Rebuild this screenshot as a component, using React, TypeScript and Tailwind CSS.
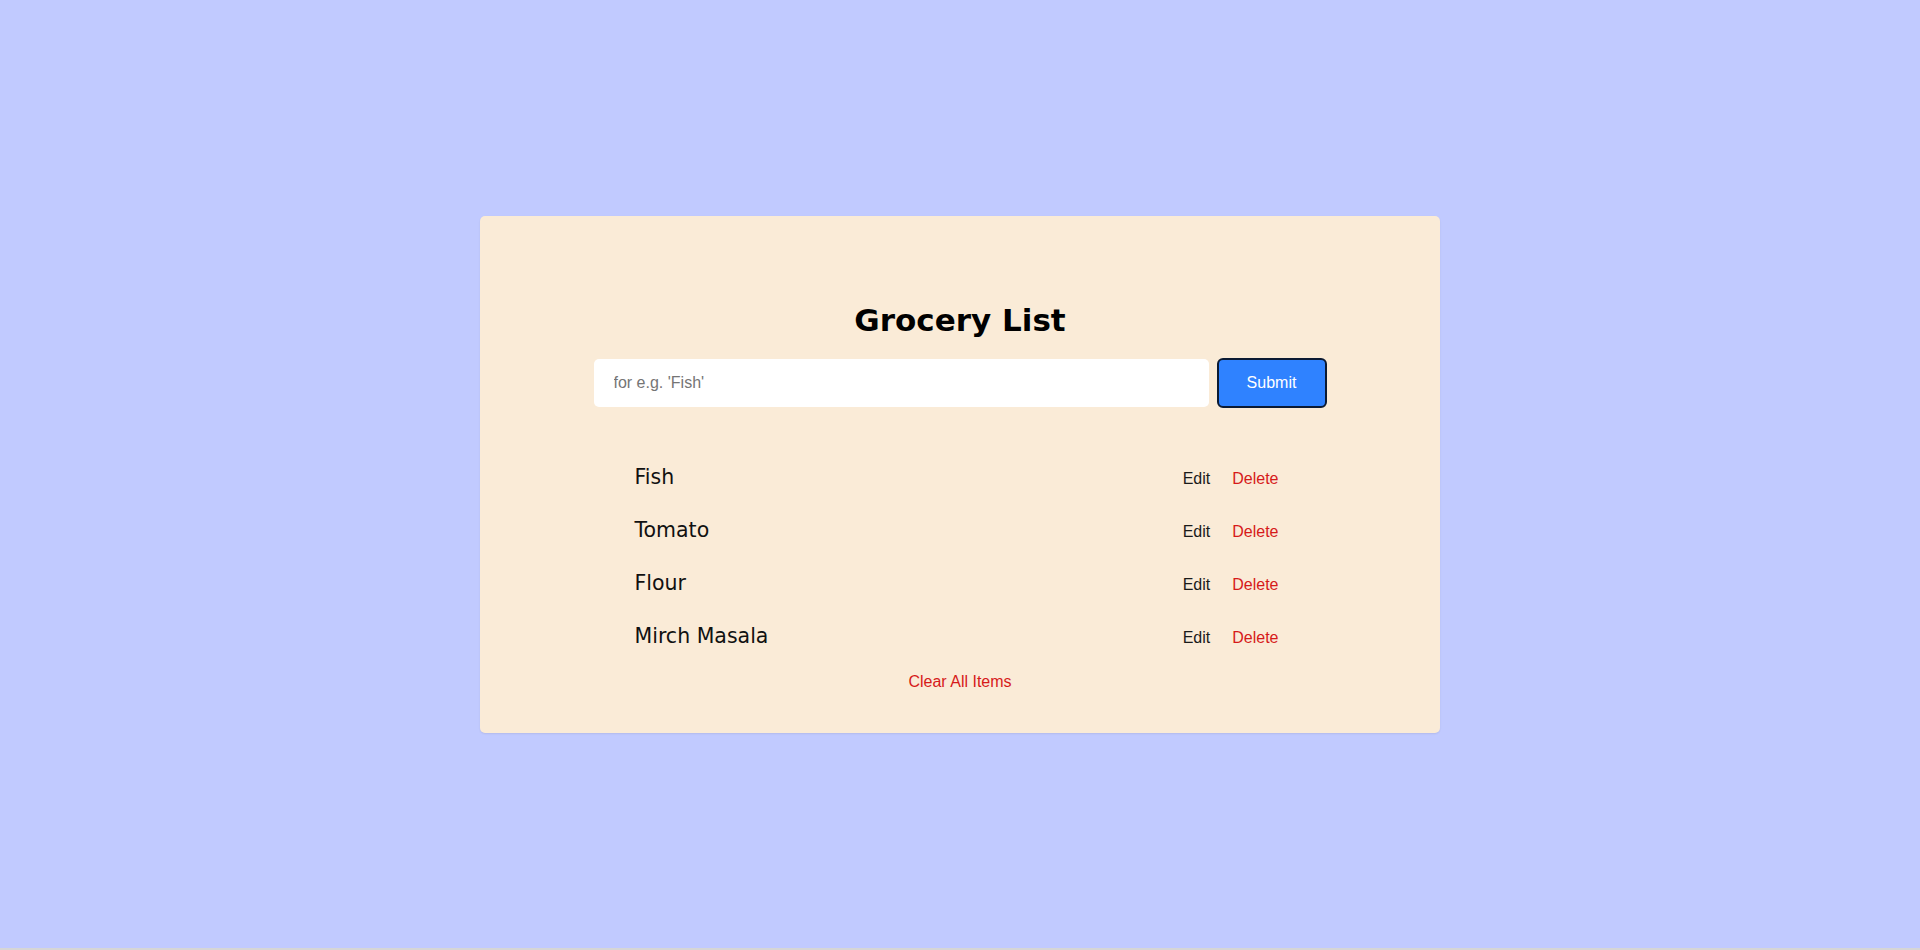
import React from "react";

const items = ["Fish", "Tomato", "Flour", "Mirch Masala"];

const App: React.FC = () => {
  return (
    <div className="flex h-screen flex-col bg-[#d6d6d6]">
      <div
        id="page"
        className="flex h-[948px] items-center justify-center bg-[#c1caff]"
      >
        <div
          id="card"
          className="flex h-[517px] w-[960px] flex-col items-center rounded-[5px] bg-[#faebd7] pt-[85px] shadow-[0_1px_2px_rgba(0,0,0,0.08)]"
        >
          <h1 className="font-['DejaVu_Sans',sans-serif] text-[31px] font-bold leading-[38px] text-black">
            Grocery List
          </h1>

          <form
            id="grocery-form"
            className="mt-[19px] flex w-[733px] items-center gap-2"
            onSubmit={(e) => e.preventDefault()}
          >
            <input
              type="text"
              placeholder="for e.g. 'Fish'"
              className="h-[48px] w-[615px] rounded-[5px] bg-white px-5 font-['Liberation_Sans',Arial,sans-serif] text-base text-black outline-none placeholder:text-[#757575]"
            />
            <button
              type="submit"
              className="h-[50px] w-[110px] rounded-[6px] border-2 border-[#0b1a33] bg-[#2f82ff] font-['Liberation_Sans',Arial,sans-serif] text-base text-white"
            >
              Submit
            </button>
          </form>

          <ul id="list" className="mt-[43px] w-[733px] pl-[41px] pr-[48px]">
            {items.map((item) => (
              <li
                key={item}
                className="flex items-baseline justify-between py-[13.5px]"
              >
                <span className="font-['DejaVu_Sans',sans-serif] text-[20.5px] leading-[26px] text-[#111]">
                  {item}
                </span>
                <div className="flex items-baseline gap-[22px] font-['Liberation_Sans',Arial,sans-serif] text-base leading-[18px]">
                  <button className="text-[#1a1a1a]">Edit</button>
                  <button className="text-[#d61a1a]">Delete</button>
                </div>
              </li>
            ))}
          </ul>

          <button className="mt-[10px] font-['Liberation_Sans',Arial,sans-serif] text-base leading-[18px] text-[#d61a1a]">
            Clear All Items
          </button>
        </div>
      </div>
    </div>
  );
};

export default App;
